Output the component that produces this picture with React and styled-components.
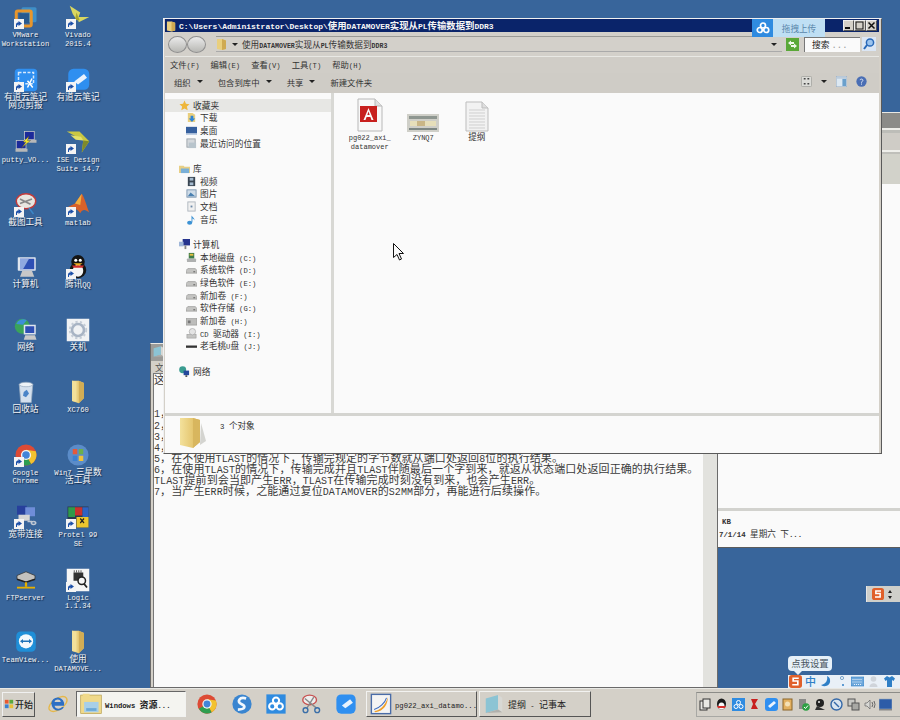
import React from 'react';
import styled, { createGlobalStyle } from 'styled-components';

const GlobalStyle = createGlobalStyle`
  html, body { margin: 0; padding: 0; background: #38659b; }
  body { font-family: "Noto Sans CJK SC", sans-serif; overflow: hidden; }
`;

const Lat = styled.span`
  font-family: "Liberation Mono", monospace;
`;

// latin runs get a mono face of their own, the CJK stays in Noto
const Mixed = ({ text }) =>
  text.split(/([\x20-\x7e]+)/).filter(Boolean).map((part, i) =>
    /^[\x20-\x7e]+$/.test(part) ? <Lat key={i}>{part}</Lat> : <span key={i}>{part}</span>
  );

const Screen = styled.div`
  width: 900px;
  height: 720px;
  display: flex;
  flex-direction: column;
  overflow: hidden;
`;

const Desktop = styled.div`
  position: relative;
  height: 688px;
  background: #38659b;
`;

const IconGrid = styled.div`
  display: grid;
  grid-template-columns: 51px 54px;
  grid-auto-rows: 62.5px;
  padding-top: 5px;
  width: 105px;
`;

const IconCell = styled.div`
  display: flex;
  flex-direction: column;
  align-items: center;
`;

const IconBox = styled.div`
  position: relative;
  width: 24px;
  height: 24px;
  svg { display: block; width: 24px; height: 24px; }
`;

const Shortcut = styled.span`
  position: absolute;
  left: 0;
  bottom: 0;
  width: 10px;
  height: 10px;
  svg { width: 10px; height: 10px; }
`;

const IconLabel = styled.div`
  color: #f4f4f4;
  font-size: 8.6px;
  line-height: 8.6px;
  text-align: center;
  white-space: nowrap;
  text-shadow: 1px 1px 1px #12294a;
  ${Lat} { font-size: 7.2px; }
  div { height: 8.6px; }
`;

const WindowFrame = styled.div`
  position: absolute;
  box-sizing: border-box;
  background: #d4d0c8;
  border: 1px solid #5c5c5c;
  border-top-color: #e8e8e4;
  border-left-color: #e8e8e4;
`;

/* back window on the right */
const BackWindow = styled(WindowFrame)`
  left: 717px;
  top: 112px;
  width: 190px;
  height: 436px;
  display: flex;
  flex-direction: column;
  border-left: 1px solid #555;
`;
const BackTitle = styled.div`
  height: 15px;
  background: #8b8b88;
`;
const BackStrip = styled.div`
  height: ${p => p.$h}px;
  background: ${p => p.$c};
`;
const BackBody = styled.div`
  flex: 1;
  background: #fafafa;
  display: flex;
  flex-direction: column;
  justify-content: flex-end;
`;
const BackRule = styled.div`
  height: 3px;
  margin-bottom: 3px;
  background: #d2d2ce;
`;
const BackMeta = styled.div`
  padding: 0 0 7px 1px;
  font-size: 8.6px;
  line-height: 13px;
  color: #333;
  ${Lat} { font-size: 7.4px; font-weight: 700; }
`;
const BackMetaLine = styled.div`
  height: 13px;
  padding-left: ${p => p.$indent || 0}px;
`;

/* notepad */
const Notepad = styled(WindowFrame)`
  left: 150px;
  top: 343px;
  width: 568px;
  height: 345px;
  border-color: #6a6a6a;
  border-top-color: #e8e8e4;
  display: flex;
  flex-direction: column;
`;
const NoteTitle = styled.div`
  height: 16px;
  background: #9b9b98;
  padding: 1px 0 0 1px;
  svg { display: block; width: 13px; height: 13px; }
`;
const NoteMenu = styled.div`
  height: 12px;
  font-size: 8.6px;
  line-height: 12px;
  padding-left: 4px;
  color: #555;
  background: #d4d0c8;
`;
const NoteBody = styled.div`
  flex: 1;
  display: flex;
  background: #fafafa;
  border-top: 1px solid #777;
  border-left: 1px solid #777;
  margin-left: 2px;
`;
const NoteText = styled.div`
  flex: 1;
  font-size: 11px;
  line-height: 11.15px;
  letter-spacing: .1px;
  color: #3a3a3a;
  ${Lat} { font-size: 10px; }
`;
const NoteLine = styled.div`
  height: 11.15px;
  white-space: nowrap;
`;
const NoteScroll = styled.div`
  width: 14px;
  background: #e2e2de;
`;

/* explorer */
const Explorer = styled(WindowFrame)`
  left: 163px;
  top: 18px;
  width: 719px;
  height: 436px;
  border-color: #5a5a5a;
  border-top-color: #f0f0f0;
  border-left-color: #f0f0f0;
  display: flex;
  flex-direction: column;
  padding: 0 2px 0 1px;
`;
const TitleBar = styled.div`
  height: 13px;
  background: #0a246a;
  display: flex;
  align-items: center;
  padding-left: 1px;
  gap: 2px;
  svg { display: block; width: 11px; height: 12px; }
`;
const TitleText = styled.div`
  flex: 1;
  color: #f6f6f6;
  font-size: 9.4px;
  line-height: 13px;
  font-weight: 700;
  white-space: nowrap;
  ${Lat} { font-size: 8px; }
`;
const WinButtons = styled.div`
  display: flex;
  margin-right: 2px;
`;
const WinButton = styled.div`
  width: 11.5px;
  height: 11px;
  box-sizing: border-box;
  background: #d4d0c8;
  border: 1px solid #eee;
  border-right-color: #555;
  border-bottom-color: #555;
  svg { display: block; width: 9px; height: 9px; }
`;
const UploadBadge = styled.div`
  position: absolute;
  left: 588px;
  top: 0;
  width: 73px;
  height: 18px;
  display: flex;
  background: #bfdff4;
  color: #5b87ab;
  font-size: 8.6px;
`;
const UploadLogo = styled.div`
  width: 21px;
  background: #2f8be0;
  display: flex;
  align-items: center;
  justify-content: center;
  svg { width: 14px; height: 12px; }
`;
const UploadText = styled.div`
  flex: 1;
  text-align: center;
  line-height: 18px;
`;

const AddressRow = styled.div`
  height: 24px;
  display: flex;
  align-items: center;
  background: #d3d0ca;
  padding-left: 3px;
  border-bottom: 1px solid #e8e8e4;
`;
const NavButton = styled.div`
  width: 19px;
  height: 17px;
  box-sizing: border-box;
  border-radius: 50%;
  border: 1px solid #8f8f8f;
  background: linear-gradient(#eaeaea, #b8b8b4);
`;
const AddressField = styled.div`
  flex: 1;
  margin-left: 10px;
  height: 14px;
  display: flex;
  align-items: center;
  border-top: 1px solid #9a9a96;
  border-bottom: 1px solid #aaa;
  font-size: 8.6px;
  color: #333;
  gap: 4px;
  svg { display: block; width: 12px; height: 12px; }
  ${Lat} { font-size: 6.6px; font-weight: 700; }
`;
const Caret = styled.i`
  display: inline-block;
  width: 0;
  height: 0;
  border-left: 3px solid transparent;
  border-right: 3px solid transparent;
  border-top: 3px solid #222;
  margin-left: ${p => p.$gap || 0}px;
`;
const FieldTail = styled.div`
  margin-left: auto;
  padding-right: 5px;
  display: flex;
`;
const RefreshBtn = styled.div`
  margin-left: 4px;
  width: 13px;
  height: 13px;
  svg { display: block; width: 13px; height: 13px; }
`;
const SearchBox = styled.div`
  margin-left: 5px;
  width: 56px;
  height: 15px;
  box-sizing: border-box;
  background: #fafafa;
  border-left: 1px solid #777;
  border-top: 1px solid #777;
  font-size: 8.8px;
  line-height: 13px;
  padding-left: 7px;
  color: #222;
`;
const SearchDots = styled(Lat)`
  color: #999;
`;
const SearchBtn = styled.div`
  margin: 0 3px 0 2px;
  width: 14px;
  height: 14px;
  svg { display: block; width: 14px; height: 14px; }
`;

const MenuBar = styled.div`
  height: 16px;
  box-sizing: border-box;
  display: flex;
  align-items: center;
  gap: 11px;
  padding: 0 0 2px 5px;
  background: #d0cdc7;
  font-size: 8.3px;
  color: #333;
  white-space: nowrap;
  ${Lat} { font-size: 7.2px; }
`;
const ToolBar = styled.div`
  height: 20px;
  box-sizing: border-box;
  display: flex;
  align-items: center;
  padding: 0 0 3px 9px;
  background: #cfccc6;
  font-size: 8.4px;
  color: #333;
`;
const ToolItem = styled.div`
  display: flex;
  align-items: center;
  gap: 6px;
  margin-right: 15px;
  white-space: nowrap;
`;
const ToolIcons = styled.div`
  margin-left: auto;
  margin-right: 12px;
  display: flex;
  align-items: center;
  gap: 9px;
  svg { display: block; width: 11px; height: 11px; }
`;

const MainPane = styled.div`
  height: 320px;
  display: flex;
  background: #fafafa;
`;
const Sidebar = styled.div`
  width: 166px;
  padding-top: 6px;
  border-right: 3px solid #d8d8d4;
  display: grid;
  grid-auto-rows: 12.67px;
  align-content: start;
`;
const TreeRow = styled.div`
  display: flex;
  align-items: center;
  gap: 3px;
  padding-left: ${p => (p.$child ? 21 : 14)}px;
  background: ${p => (p.$selected ? '#e7e7e4' : 'transparent')};
  font-size: 8.7px;
  color: #333;
  white-space: nowrap;
  svg { display: block; width: 11px; height: 11px; flex: none; }
  ${Lat} { font-size: 7.2px; }
`;
const FileArea = styled.div`
  flex: 1;
  display: flex;
  align-items: flex-start;
  padding: 4px 0 0 9px;
`;
const FileItem = styled.div`
  width: 53.5px;
  display: flex;
  flex-direction: column;
  align-items: center;
`;
const FileIcon = styled.div`
  height: 35px;
  display: flex;
  align-items: flex-end;
  svg { display: block; width: ${p => p.$w}px; height: ${p => p.$h}px; }
`;
const FileLabel = styled.div`
  font-size: 8.6px;
  line-height: 8.5px;
  text-align: center;
  color: #333;
  white-space: nowrap;
  ${Lat} { font-size: 7px; }
  div { height: 8.5px; }
`;
const StatusBar = styled.div`
  flex: 1;
  display: flex;
  align-items: flex-start;
  background: #fafafa;
  border-top: 3px solid #d4d4d0;
  padding-left: 14px;
  svg { display: block; width: 28px; height: 31px; margin-top: 1px; }
`;
const StatusText = styled.div`
  margin: 3px 0 0 13px;
  font-size: 8.6px;
  color: #333;
  ${Lat} { font-size: 7.4px; }
`;

/* overlays on the desktop */
const Cursor = styled.div`
  position: absolute;
  left: 393px;
  top: 243px;
  svg { display: block; width: 11px; height: 18px; }
`;
const ImeFloat = styled.div`
  position: absolute;
  left: 866px;
  top: 586px;
  width: 34px;
  height: 16px;
  background: #cfcfca;
  border-left: 1px solid #e6e6e6;
  display: flex;
  align-items: center;
  gap: 4px;
  padding-left: 5px;
  box-sizing: border-box;
  svg { display: block; width: 12px; height: 12px; }
`;
const ImeDots = styled.div`
  display: flex;
  flex-direction: column;
  gap: 3px;
  i { display: block; width: 0; height: 0; border-left: 2.5px solid transparent; border-right: 2.5px solid transparent; }
  i:first-child { border-bottom: 3px solid #222; }
  i:last-child { border-top: 3px solid #222; }
`;
const ImeBar = styled.div`
  position: absolute;
  left: 788px;
  top: 675px;
  width: 112px;
  height: 13px;
  background: #e9f0f7;
  display: flex;
  align-items: center;
  gap: 3px;
  padding-left: 1px;
  box-sizing: border-box;
  svg { display: block; width: 13px; height: 13px; flex: none; }
`;
const ImeZh = styled.span`
  color: #2f7fc6;
  font-size: 11px;
  line-height: 13px;
  font-weight: 500;
`;
const ImeTip = styled.div`
  position: absolute;
  left: 788px;
  top: 656px;
  width: 44px;
  height: 15px;
  background: #e6f0f8;
  border-radius: 4px;
  color: #4a5560;
  font-size: 9.4px;
  line-height: 15px;
  text-align: center;
  &::after {
    content: "";
    position: absolute;
    left: 6px;
    bottom: -4px;
    border-left: 4px solid transparent;
    border-right: 4px solid transparent;
    border-top: 4px solid #e6f0f8;
  }
`;

/* taskbar */
const TaskBar = styled.div`
  height: 32px;
  box-sizing: border-box;
  background: #d4d0c8;
  border-top: 1px solid #e8e8e4;
  display: flex;
  align-items: center;
  padding: 1px 0 2px 2px;
`;
const StartButton = styled.div`
  width: 33px;
  height: 25px;
  box-sizing: border-box;
  display: flex;
  align-items: center;
  justify-content: center;
  gap: 1px;
  border: 1px solid #f0f0f0;
  border-right-color: #555;
  border-bottom-color: #555;
  font-size: 9px;
  color: #222;
  font-weight: 500;
  svg { width: 10px; height: 10px; }
`;
const QuickIcon = styled.div`
  width: 22px;
  height: 22px;
  margin-left: ${p => p.$gap}px;
  svg { display: block; width: 22px; height: 22px; }
`;
const TaskButton = styled.div`
  width: ${p => p.$w}px;
  height: 26px;
  box-sizing: border-box;
  margin-left: ${p => p.$gap}px;
  display: flex;
  align-items: center;
  gap: 3px;
  padding-left: 3px;
  background: ${p => (p.$active ? '#f4f4f0' : '#d4d0c8')};
  border: 1px solid ${p => (p.$active ? '#666' : '#f2f2f0')};
  border-right-color: ${p => (p.$active ? '#f2f2f0' : '#555')};
  border-bottom-color: ${p => (p.$active ? '#f2f2f0' : '#555')};
  font-size: 9px;
  color: #222;
  white-space: nowrap;
  font-weight: ${p => (p.$active ? 700 : 400)};
  svg { display: block; width: 22px; height: 22px; flex: none; }
  ${Lat} { font-size: 7.2px; }
`;
const Tray = styled.div`
  margin-left: auto;
  height: 25px;
  width: 204px;
  box-sizing: border-box;
  border: 1px solid #a8a8a4;
  border-right: none;
  border-top-color: #8c8c88;
  display: flex;
  align-items: center;
  padding-left: 2px;
  gap: 3.4px;
  svg { display: block; width: 13px; height: 13px; flex: none; }
`;

/* icons */
const ArrowBadge = () => (
  <Shortcut>
    <svg viewBox="0 0 10 10"><rect width="10" height="10" fill="#f4f4f4" /><path d="M2 8V5.5C2 4 3 3.4 4.5 3.4V2L8 4.6 4.5 7V5.4C3.4 5.4 3 6 3 8Z" fill="#1c4fa8" /></svg>
  </Shortcut>
);

const Svg = ({ children, vb = '0 0 32 32' }) => <svg viewBox={vb}>{children}</svg>;

const VMware = () => <Svg><rect x="10" y="3" width="20" height="20" rx="2" fill="#3f8fc8" /><rect x="3" y="8" width="20" height="20" rx="2" fill="none" stroke="#e8962c" strokeWidth="4" /><rect x="7" y="11" width="13" height="13" fill="#28598e" /></Svg>;
const Vivado = () => <Svg><path d="M5 1L19 10 15 21 9 12Z" fill="#d9d760" /><path d="M15 16L31 16 17 23Z" fill="#d9d760" /><path d="M14 10L18 20 12 20Z" fill="#a8a52e" /></Svg>;
const YoudaoClip = () => <Svg><rect x="1" y="1" width="30" height="30" rx="5" fill="#2f8ff0" /><rect x="6" y="6" width="20" height="15" fill="none" stroke="#d5e8fb" strokeWidth="2" strokeDasharray="4 2" /><path d="M18 26L24 14M25 26L18 17" stroke="#fff" strokeWidth="2" /></Svg>;
const Youdao = () => <Svg><rect x="3" y="1" width="28" height="28" rx="7" fill="#2f8ff0" /><path d="M11 18L24 8 28 13 16 22Z" fill="#e8f2fd" /></Svg>;
const Putty = () => <Svg><rect x="14" y="2" width="13" height="11" fill="#1c2a9a" stroke="#ccc" /><rect x="3" y="14" width="13" height="11" fill="#1c2a9a" stroke="#ccc" /><rect x="14" y="13" width="16" height="4" fill="#b8b8b8" /><rect x="2" y="25" width="16" height="4" fill="#b8b8b8" /><path d="M20 8L12 16 16 16 10 24 22 14 18 14Z" fill="#f2e32e" stroke="#333" strokeWidth=".5" /></Svg>;
const ISE = () => <Svg><path d="M1 2H18L31 15 21 30 23 14Z" fill="#c9c843" /><path d="M23 14L31 15 21 30Z" fill="#7e8a2a" /><path d="M6 7L20 9 23 14 13 13Z" fill="#e3e26a" /></Svg>;
const Snip = () => <Svg><ellipse cx="16" cy="11" rx="13" ry="10" fill="#e8e6e0" stroke="#c23b3b" strokeWidth="2" /><path d="M8 14L24 8M8 8L22 15" stroke="#888" strokeWidth="2.4" /><path d="M10 20L6 30M20 20L26 28" stroke="#3a86c8" strokeWidth="2" /></Svg>;
const Matlab = () => <Svg><path d="M2 19L12 14 21 1C24 4 28 19 31 26 26 22 22 21 19 27 16 22 12 20 9 22Z" fill="#d8622a" /><path d="M12 14L21 1 19 16Z" fill="#f0b040" /></Svg>;
const ComputerIcon = () => <Svg><rect x="5" y="3" width="24" height="18" rx="1" fill="#dfe5ee" /><path d="M8 5H27V19H8Z" fill="#2e4fb4" /><path d="M8 5L20 5 12 19H8Z" fill="#8fa8e0" /><path d="M11 21H24L27 29H8Z" fill="#c8c8c8" /></Svg>;
const QQ = () => <Svg><ellipse cx="16" cy="20" rx="11" ry="11" fill="#141414" /><ellipse cx="16" cy="9" rx="9" ry="9" fill="#141414" /><ellipse cx="16" cy="21" rx="7" ry="8" fill="#f4f4f4" /><circle cx="13" cy="7" r="2" fill="#fff" /><circle cx="19" cy="7" r="2" fill="#fff" /><path d="M10 11H22L16 15Z" fill="#eeb020" /><path d="M8 14H24L22 17H10Z" fill="#d02c2c" /></Svg>;
const Network = () => <Svg><circle cx="11" cy="11" r="10" fill="#3aa35a" /><path d="M3 8A10 10 0 0 1 17 3L12 9Z" fill="#3d8fd8" /><rect x="13" y="9" width="16" height="13" fill="#dfe5ee" /><rect x="15" y="11" width="12" height="9" fill="#2e4fb4" /><path d="M15 23H28L30 29H13Z" fill="#c8c8c8" /></Svg>;
const Shutdown = () => <Svg><rect x="1" y="1" width="30" height="30" fill="#f0f2f4" /><circle cx="16" cy="16" r="8" fill="none" stroke="#a8b4c4" strokeWidth="3.5" /><circle cx="16" cy="16" r="11" fill="none" stroke="#c4ccd6" strokeWidth="2.5" strokeDasharray="3 3" /></Svg>;
const Recycle = () => <Svg><path d="M7 6H25L23 30H9Z" fill="#d4e0ee" stroke="#9aacc0" /><ellipse cx="16" cy="6" rx="9" ry="3" fill="#eef3f8" stroke="#9aacc0" /><path d="M13 16L17 13 20 18 16 23 12 21Z" fill="#4a84c8" /></Svg>;
const Folder = () => <Svg><path d="M8 1H17L24 4V24L17 31 8 28Z" fill="#e9cf7e" /><path d="M17 1L24 4V24L17 31Z" fill="#d2ad55" /><path d="M8 1L14 2 14 29 8 28Z" fill="#f2e09a" /></Svg>;
const StatusFolder = () => <Svg vb="0 0 28 31"><defs><linearGradient id="statusFold" x1="0" x2="1" y1="0" y2="0"><stop offset="0" stopColor="#f3e19c" /><stop offset=".6" stopColor="#e6c873" /><stop offset="1" stopColor="#cfa94f" /></linearGradient></defs><path d="M22 6L27 24 21 28Z" fill="#d4d4d0" /><path d="M1 1H14L21 3V25L14 31 1 28Z" fill="url(#statusFold)" /><path d="M14 1L21 3V25L14 31Z" fill="#d8b65e" /></Svg>;
const Chrome = () => <Svg><circle cx="16" cy="16" r="14" fill="#dd4b35" /><path d="M16 16L4 23A14 14 0 0 0 23 28Z" fill="#2f9e4f" /><path d="M16 16L23 28A14 14 0 0 0 29 11L16 9Z" fill="#f2c230" /><circle cx="16" cy="16" r="6.8" fill="#f5f5f5" /><circle cx="16" cy="16" r="5" fill="#4285d8" /></Svg>;
const Win7 = () => <Svg><circle cx="16" cy="16" r="14" fill="#5b8cc8" /><rect x="9" y="8" width="6" height="7" fill="#e45a3a" /><rect x="17" y="8" width="6" height="7" fill="#6ab04c" /><rect x="9" y="17" width="6" height="7" fill="#3a80d0" /><rect x="17" y="17" width="6" height="7" fill="#efc23a" /></Svg>;
const Broadband = () => <Svg><rect x="4" y="1" width="13" height="12" fill="#27409c" /><rect x="15" y="3" width="13" height="12" fill="#6f8dd8" /><rect x="6" y="13" width="15" height="8" fill="#d6d6d6" /><path d="M18 22H24M26 22a3 2 0 1 0 .1 0" stroke="#c0c8d4" strokeWidth="2" fill="none" /></Svg>;
const Protel = () => <Svg><rect x="2" y="2" width="28" height="28" fill="#283a50" /><path d="M3 3H12V16H3Z" fill="#2f9a4a" /><path d="M12 3H22V14H12Z" fill="#c8322e" /><path d="M22 3H30V16H22Z" fill="#2d62c4" /><path d="M14 16H30V30H14Z" fill="#ecc62e" /><path d="M19 18L24 24M24 18L19 24" stroke="#222" strokeWidth="1.6" /></Svg>;
const Ftp = () => <Svg><path d="M4 10L16 5 28 10 28 15 16 19 4 15Z" fill="#c4c2be" stroke="#333" /><path d="M4 15L16 19 28 15" fill="none" stroke="#222" strokeWidth="2" /><rect x="14.5" y="19" width="3" height="6" fill="#e6b000" /><rect x="4" y="25" width="24" height="2.4" fill="#e6b000" /></Svg>;
const Logic = () => <Svg><rect x="1" y="1" width="30" height="30" fill="#f6f6f6" /><rect x="10" y="6" width="13" height="11" fill="#333" /><path d="M11 3V6M14 3V6M17 3V6M20 3V6" stroke="#333" /><circle cx="21" cy="17" r="5" fill="#f6f6f6" stroke="#222" strokeWidth="2" /><path d="M24 21L28 26" stroke="#222" strokeWidth="2.4" /></Svg>;
const TeamViewer = () => <Svg><rect x="3" y="2" width="26" height="27" rx="6" fill="#1f8fd8" /><circle cx="16" cy="15" r="9.5" fill="#f3f8fc" /><path d="M8 15L12 12V14H20V12L24 15 20 18V16H12V18Z" fill="#1f72b8" /></Svg>;
const PdfIcon = () => <Svg vb="0 0 26 34"><path d="M1 1H18L25 8V33H1Z" fill="#f8f8f8" stroke="#b8b8b8" /><path d="M18 1V8H25" fill="#e0e0e0" stroke="#b8b8b8" /><rect x="3" y="8" width="17" height="16" fill="#c8201e" /><path d="M11.5 10L16.5 22H14.5L13.4 19H9.6L8.5 22H6.5ZM10.3 17H12.7L11.5 13.6Z" fill="#fafafa" /></Svg>;
const ChipIcon = () => <Svg vb="0 0 32 18"><rect width="32" height="18" fill="#cfcfc8" /><rect x="2" y="2" width="28" height="3" fill="#8e9690" /><rect x="3" y="7" width="26" height="5" fill="#e6dfba" /><rect x="10" y="7" width="8" height="5" fill="#c9b686" /><rect x="2" y="14" width="28" height="2" fill="#7e8884" /></Svg>;
const TxtIcon = () => <Svg vb="0 0 24 31"><path d="M1 1H17L23 7V30H1Z" fill="#f2f2f2" stroke="#bdbdbd" /><path d="M17 1V7H23" fill="#dedede" stroke="#bdbdbd" /><path d="M4 9H20M4 12H20M4 15H20M4 18H20M4 21H20M4 24H20M4 27H20" stroke="#cfcfcf" /></Svg>;
const SmallFolder = () => <Svg vb="0 0 12 12"><path d="M1 1H6L10 2.5V11L6 12 1 11Z" fill="#e9cf7e" /><path d="M6 1L10 2.5V11L6 12Z" fill="#cfaa52" /></Svg>;
const Star = () => <Svg vb="0 0 12 12"><path d="M6 .5L7.6 4.2 11.5 4.6 8.6 7.2 9.5 11.3 6 9.2 2.5 11.3 3.4 7.2.5 4.6 4.4 4.2Z" fill="#eeb63a" /></Svg>;
const DownloadIcon = () => <Svg vb="0 0 12 12"><path d="M2 1H7L10 3V11H2Z" fill="#e9cf7e" /><path d="M5 4H8V7H10L6.5 11 3 7H5Z" fill="#2f84d4" /></Svg>;
const DesktopIcon = () => <Svg vb="0 0 12 12"><rect y="2" width="12" height="7" fill="#36609e" /><rect y="9" width="12" height="1.5" fill="#9cb4d4" /></Svg>;
const RecentIcon = () => <Svg vb="0 0 12 12"><rect x="1" y="1" width="9" height="9" fill="#d4d8dc" stroke="#9aa2aa" /><rect x="3" y="5" width="8" height="6" fill="#b8c4cc" /></Svg>;
const LibIcon = () => <Svg vb="0 0 12 12"><path d="M0 3H5L6 4H12V11H0Z" fill="#e8cf85" /><path d="M2 6H11V11H2Z" fill="#7ab0d8" /></Svg>;
const VideoIcon = () => <Svg vb="0 0 12 12"><rect x="2" y="1" width="8" height="10" fill="#3a4652" /><rect x="4" y="2" width="4" height="3" fill="#a4bace" /><rect x="4" y="7" width="4" height="3" fill="#a4bace" /></Svg>;
const PicIcon = () => <Svg vb="0 0 12 12"><rect x="1" y="2" width="10" height="8" fill="#cfdce8" stroke="#7f98b0" /><path d="M2 9L5 5 10 9Z" fill="#4a80b0" /></Svg>;
const DocIcon = () => <Svg vb="0 0 12 12"><rect x="2" y="1" width="8" height="10" fill="#f0f0f0" stroke="#aeb6be" /><rect x="5" y="5" width="2" height="2" fill="#6a88a8" /></Svg>;
const MusicIcon = () => <Svg vb="0 0 12 12"><ellipse cx="4" cy="9.5" rx="2.8" ry="2.2" fill="#3c92d4" /><path d="M6 9V1C6 3 10 4 9 7 8.5 5 7 5 7 5V9Z" fill="#3c92d4" /></Svg>;
const PcIcon = () => <Svg vb="0 0 12 12"><rect x="4" y="0" width="8" height="7" fill="#26348e" /><rect x="0" y="3" width="5" height="5" fill="#9fb6d8" /><path d="M6 7H8V11H6Z" fill="#888" /></Svg>;
const SysDisk = () => <Svg vb="0 0 12 12"><rect x="1" y="7" width="10" height="4" rx="1" fill="#aeb0b0" /><rect x="3" y="1" width="6" height="6" fill="#3f7c4a" /><rect x="4" y="2" width="4" height="2" fill="#e6c040" /></Svg>;
const Disk = () => <Svg vb="0 0 12 12"><path d="M2 5H10L12 7V10H0V7Z" fill="#c4c4c2" stroke="#8a8a88" strokeWidth=".6" /><rect x="8" y="8" width="2" height="1" fill="#555" /></Svg>;
const Disk2 = () => <Svg vb="0 0 12 12"><rect x="0" y="4" width="12" height="7" fill="#bcbcba" stroke="#8a8a88" strokeWidth=".6" /><path d="M2 6H5V9H2Z" fill="#777" /></Svg>;
const CdIcon = () => <Svg vb="0 0 12 12"><rect x="1" y="7" width="10" height="4" fill="#c4c4c2" stroke="#888" strokeWidth=".5" /><circle cx="7" cy="4" r="3.5" fill="#e4e4e4" stroke="#888" strokeWidth=".5" /></Svg>;
const UDisk = () => <Svg vb="0 0 12 12"><rect x="0" y="6" width="12" height="2.5" fill="#333" /></Svg>;
const NetIcon = () => <Svg vb="0 0 12 12"><circle cx="4" cy="4" r="3.8" fill="#3a9c90" /><rect x="5" y="5" width="6" height="5" fill="#24489c" /><rect x="7" y="10" width="2" height="2" fill="#555" /></Svg>;
const BackCloud = ({ c = '#fff' }) => <Svg vb="0 0 28 24"><circle cx="14" cy="7" r="5" fill="none" stroke={c} strokeWidth="3.4" /><circle cx="7.5" cy="16" r="5" fill="none" stroke={c} strokeWidth="3.4" /><circle cx="20.5" cy="16" r="5" fill="none" stroke={c} strokeWidth="3.4" /></Svg>;
const Refresh = () => <Svg vb="0 0 13 13"><rect width="13" height="13" fill="#5aa838" /><path d="M2 5L5 2.5V4H8V6H5V7.5ZM11 8L8 10.5V9H5V7H8V5.5Z" fill="#f0f8ea" /></Svg>;
const SearchGlass = () => <Svg vb="0 0 14 14"><rect width="14" height="14" fill="#dbe6f4" /><circle cx="8" cy="5.5" r="3.6" fill="#9cc4ee" stroke="#2868b8" strokeWidth="1.5" /><path d="M5 8L2 12" stroke="#2868b8" strokeWidth="2" /></Svg>;
const ViewIcon = () => <Svg vb="0 0 12 12"><rect x=".5" y=".5" width="11" height="11" rx="1" fill="#dcdcd8" stroke="#a8a8a4" /><path d="M3 3H5M7 3H9M3 8.5H5M7 8.5H9" stroke="#444" strokeWidth="1.6" /></Svg>;
const PaneIcon = () => <Svg vb="0 0 12 12"><rect width="12" height="12" fill="#dce8f2" stroke="#8ea4ba" /><rect x="7" y="3" width="4" height="8" fill="#6aa0cc" /><rect x="1" y="1" width="10" height="2" fill="#bcccdc" /></Svg>;
const HelpIcon = () => <Svg vb="0 0 12 12"><circle cx="6" cy="6" r="5.6" fill="#4a6eb4" /><path d="M4.5 4.5C4.5 3 7.5 3 7.5 4.6 7.5 6 6 5.8 6 7.4" fill="none" stroke="#e8eef8" /><rect x="5.5" y="8.2" width="1" height="1.2" fill="#e8eef8" /></Svg>;
const Sogou = () => <Svg vb="0 0 14 14"><rect width="14" height="14" rx="3" fill="#e0602a" /><path d="M10.5 3.5H4.5V6.5H9.5V10.5H3.5" fill="none" stroke="#fff" strokeWidth="1.8" /></Svg>;
const Ie = () => <Svg><ellipse cx="16" cy="16" rx="15" ry="8" fill="none" stroke="#e6b84a" strokeWidth="2" transform="rotate(-35 16 16)" /><path d="M6 16a9.5 10 0 1 1 18.8 2.5H11c.5 5 8 6 11 2h2.5c-3 7-16 8-18-4.5ZM11 13h9c-.5-4.500-8-4.500-9 0Z" fill="#2d6fc4" /></Svg>;
const SogouBrowser = () => <Svg><circle cx="16" cy="16" r="14" fill="#3a85d0" /><path d="M22 8C12 5 8 13 15 16S21 24 10 24" fill="none" stroke="#f2f8fd" strokeWidth="4" /></Svg>;
const BaiduApp = () => <Svg><rect x="2" y="2" width="28" height="28" fill="#2f8be0" /><circle cx="16" cy="11" r="4.5" fill="none" stroke="#fff" strokeWidth="3" /><circle cx="10.500" cy="19.500" r="4.5" fill="none" stroke="#fff" strokeWidth="3" /><circle cx="21.500" cy="19.500" r="4.5" fill="none" stroke="#fff" strokeWidth="3" /></Svg>;
const Scissors = () => <Svg><ellipse cx="14" cy="10" rx="10" ry="7" fill="#eee" stroke="#c85050" strokeWidth="2" /><path d="M7 8L24 22M20 6L10 22" stroke="#888" strokeWidth="2" /><circle cx="8" cy="25" r="3.5" fill="none" stroke="#3a6ea8" strokeWidth="2" /><circle cx="25" cy="25" r="3.5" fill="none" stroke="#3a6ea8" strokeWidth="2" /></Svg>;
const YoudaoTask = () => <Svg><rect x="2" y="2" width="28" height="28" rx="7" fill="#2f8ff0" /><path d="M10 18L22 9 26 14 15 22Z" fill="#e8f2fd" /></Svg>;
const ExplorerTask = () => <Svg><rect x="1" y="3" width="30" height="27" fill="#f0d98a" stroke="#b8a050" /><rect x="4" y="1" width="10" height="4" fill="#f0d98a" /><path d="M6 13H27V28H6Z" fill="#a8cfe8" /><path d="M9 22H24V26H9Z" fill="#6aa8d8" /></Svg>;
const AcrobatTask = () => <Svg><rect x="2" y="2" width="28" height="28" fill="#f4f4f4" stroke="#4a6ca8" strokeWidth="2" /><path d="M6 26C14 26 22 18 26 6 26 16 20 26 8 28Z" fill="#f0a028" /><path d="M6 24C14 22 22 14 24 7" fill="none" stroke="#3c6cc0" strokeWidth="1.5" /></Svg>;
const NotepadTask = () => <Svg><path d="M4 8L22 3V24L4 29Z" fill="#8cc4d4" /><path d="M22 3L28 7V28L22 24Z" fill="#d8d8d4" /><path d="M4 29L22 24 28 28Z" fill="#b0b0ac" /></Svg>;
const Logo = () => <Svg vb="0 0 12 12"><rect x="1" y="1" width="4.500" height="4.500" fill="#e85a30" /><rect x="6.500" y="1" width="4.500" height="4.500" fill="#5aa83c" /><rect x="1" y="6.500" width="4.500" height="4.500" fill="#3a80d0" /><rect x="6.500" y="6.500" width="4.500" height="4.500" fill="#e8c03a" /></Svg>;
const Cup = () => <Svg vb="0 0 13 13"><rect x="1" y="3" width="7" height="9" fill="#e8e8e4" stroke="#333" /><rect x="4" y="1" width="7" height="9" fill="#e8e8e4" stroke="#333" /></Svg>;
const TrayQQ = () => <Svg vb="0 0 13 13"><ellipse cx="6.500" cy="6" rx="4.500" ry="5.500" fill="#1a1a1a" /><ellipse cx="6.500" cy="8" rx="3" ry="3.500" fill="#fafafa" /><path d="M2 8H11L10 10H3Z" fill="#d8302c" /></Svg>;
const TrayE = () => <Svg vb="0 0 13 13"><path d="M3 1H10L7 6 10 11H3L5 6Z" fill="#c8201e" /></Svg>;
const TrayDoc = () => <Svg vb="0 0 13 13"><rect x="2" y="1" width="9" height="11" fill="#e2b060" stroke="#8a6428" /><circle cx="6.500" cy="6" r="2.500" fill="#f4e0b4" /></Svg>;
const TrayShield = () => <Svg vb="0 0 13 13"><rect x="2" y="1" width="7" height="10" fill="#8a8a88" /><circle cx="9" cy="9" r="3.800" fill="#2ea044" /><path d="M7 9L8.500 10.500 11 7.500" fill="none" stroke="#fff" /></Svg>;
const TrayInk = () => <Svg vb="0 0 13 13"><circle cx="6" cy="5" r="4" fill="#222" /><path d="M3 8L11 12H1Z" fill="#333" /><circle cx="5" cy="4" r="1" fill="#eee" /></Svg>;
const TrayGauge = () => <Svg vb="0 0 13 13"><circle cx="6.500" cy="6.500" r="5.500" fill="#d8e4f0" stroke="#3468a8" strokeWidth="1.400" /><path d="M4 4L9 9" stroke="#3468a8" strokeWidth="1.400" /></Svg>;
const TrayNet = () => <Svg vb="0 0 13 13"><rect x="1" y="1" width="7" height="7" fill="#c8c8c4" stroke="#555" /><rect x="5" y="5" width="7" height="7" fill="#a8a8a4" stroke="#555" /></Svg>;
const TraySound = () => <Svg vb="0 0 13 13"><path d="M2 5H4L7 2V11L4 8H2Z" fill="#d8d8d4" stroke="#666" strokeWidth=".7" /><path d="M9 4Q10.500 6.500 9 9M11 3Q13 6.500 11 10" fill="none" stroke="#666" /></Svg>;
const TrayScreen = () => <Svg vb="0 0 13 13"><rect y="1" width="13" height="10" fill="#2c5ca8" stroke="#9ab" strokeWidth=".6" /><rect y="11" width="13" height="1.500" fill="#888" /></Svg>;
const BaiduTray = () => <Svg vb="0 0 13 13"><rect width="13" height="13" fill="#2f8be0" /><circle cx="6.500" cy="4.500" r="2" fill="none" stroke="#fff" /><circle cx="4" cy="8.500" r="2" fill="none" stroke="#fff" /><circle cx="9" cy="8.500" r="2" fill="none" stroke="#fff" /></Svg>;
const YoudaoTray = () => <Svg vb="0 0 13 13"><rect width="13" height="13" rx="3" fill="#2f8ff0" /><path d="M3 8L9 3 11 5 5 10Z" fill="#eaf3fd" /></Svg>;
const Moon = () => <Svg vb="0 0 13 13"><path d="M8 1C9 5 7 9 2 10 6 13 12 10 11 5 11 3 10 2 8 1Z" fill="#2f7fc6" /></Svg>;
const DotIcon = () => <Svg vb="0 0 13 13"><circle cx="7" cy="3" r="1.600" fill="none" stroke="#7aa6cc" /><circle cx="8" cy="10" r="1" fill="#2f7fc6" /></Svg>;
const Keys = () => <Svg vb="0 0 13 13"><rect y="2" width="13" height="9" fill="#6ea8dc" stroke="#2f7fc6" strokeWidth=".6" /><path d="M1.500 4.500H11.500M1.500 7H11.500M3 9.500H10" stroke="#e8f2fb" strokeDasharray="1 1" /></Svg>;
const Man = () => <Svg vb="0 0 13 13"><circle cx="6.500" cy="4" r="2.800" fill="#cfd4da" /><path d="M2.500 12C2.500 7 10.500 7 10.500 12Z" fill="#cfd4da" /></Svg>;
const Shirt = () => <Svg vb="0 0 13 13"><path d="M4 1L1 3.500 2.500 6 4 5V12H9V5L10.500 6 12 3.500 9 1 6.500 2.500Z" fill="#2f7fc6" /></Svg>;
const Wrench = () => <Svg vb="0 0 13 13"><path d="M2 12L8 5.500C7.500 3 9 1 11.500 1.500L9.500 3.500 10.500 5 12.500 3C13 6 10 7.500 8.500 7L3 13Z" fill="#2f7fc6" /></Svg>;
const ArrowCursor = () => <Svg vb="0 0 11 18"><path d="M.5.5V14.500L4 11.500 6.500 17 8.500 16 6 10.500H10.500Z" fill="#fafafa" stroke="#111" /></Svg>;

const desktopIcons = [
  { icon: VMware, lines: ['VMware', 'Workstation'], link: true },
  { icon: Vivado, lines: ['Vivado', '2015.4'], link: true },
  { icon: YoudaoClip, lines: ['有道云笔记', '网页剪报'], link: true },
  { icon: Youdao, lines: ['有道云笔记'], link: true },
  { icon: Putty, lines: ['putty_VO...'], link: false },
  { icon: ISE, lines: ['ISE Design', 'Suite 14.7'], link: true },
  { icon: Snip, lines: ['截图工具'], link: true },
  { icon: Matlab, lines: ['matlab'], link: true },
  { icon: ComputerIcon, lines: ['计算机'], link: false },
  { icon: QQ, lines: ['腾讯QQ'], link: true },
  { icon: Network, lines: ['网络'], link: false },
  { icon: Shutdown, lines: ['关机'], link: false },
  { icon: Recycle, lines: ['回收站'], link: false },
  { icon: Folder, lines: ['XC760'], link: false },
  { icon: Chrome, lines: ['Google', 'Chrome'], link: true },
  { icon: Win7, lines: ['Win7_三星数', '活工具'], link: false },
  { icon: Broadband, lines: ['宽带连接'], link: true },
  { icon: Protel, lines: ['Protel 99', 'SE'], link: true },
  { icon: Ftp, lines: ['FTPserver'], link: false },
  { icon: Logic, lines: ['Logic', '1.1.34'], link: true },
  { icon: TeamViewer, lines: ['TeamView...'], link: false },
  { icon: Folder, lines: ['使用', 'DATAMOVE...'], link: false },
];

const treeRows = [
  { icon: Star, text: '收藏夹', selected: true },
  { icon: DownloadIcon, text: '下载', child: true },
  { icon: DesktopIcon, text: '桌面', child: true },
  { icon: RecentIcon, text: '最近访问的位置', child: true },
  {},
  { icon: LibIcon, text: '库' },
  { icon: VideoIcon, text: '视频', child: true },
  { icon: PicIcon, text: '图片', child: true },
  { icon: DocIcon, text: '文档', child: true },
  { icon: MusicIcon, text: '音乐', child: true },
  {},
  { icon: PcIcon, text: '计算机' },
  { icon: SysDisk, text: '本地磁盘 (C:)', child: true },
  { icon: Disk, text: '系统软件 (D:)', child: true },
  { icon: Disk, text: '绿色软件 (E:)', child: true },
  { icon: Disk, text: '新加卷 (F:)', child: true },
  { icon: Disk, text: '软件存储 (G:)', child: true },
  { icon: Disk2, text: '新加卷 (H:)', child: true },
  { icon: CdIcon, text: 'CD 驱动器 (I:)', child: true },
  { icon: UDisk, text: '老毛桃U盘 (J:)', child: true },
  {},
  { icon: NetIcon, text: '网络' },
];

const noteLines = [
  '这', '', '', '1\uFF0C', '2\uFF0C', '3\uFF0C', '4\uFF0C',
  '5\uFF0C在不使用TLAST的情况下\uFF0C传输完规定的字节数就从端口处返回8位的执行结果。',
  '6\uFF0C在使用TLAST的情况下\uFF0C传输完成并且TLAST伴随最后一个字到来\uFF0C就返从状态端口处返回正确的执行结果。',
  'TLAST提前到会当即产生ERR\uFF0CTLAST在传输完成时刻没有到来\uFF0C也会产生ERR。',
  '7\uFF0C当产生ERR时候\uFF0C之能通过复位DATAMOVER的S2MM部分\uFF0C再能进行后续操作。',
];

const App = () => (
  <Screen>
    <GlobalStyle />
    <Desktop>
      <IconGrid>
        {desktopIcons.map((d, i) => (
          <IconCell key={i}>
            <IconBox>
              <d.icon />
              {d.link && <ArrowBadge />}
            </IconBox>
            <IconLabel>
              {d.lines.map(l => <div key={l}><Mixed text={l} /></div>)}
            </IconLabel>
          </IconCell>
        ))}
      </IconGrid>

      <BackWindow>
        <BackTitle />
        <BackStrip $h={2} $c="#eeeeea" />
        <BackStrip $h={3} $c="#bdbdb8" />
        <BackStrip $h={17} $c="#cfccc6" />
        <BackStrip $h={2} $c="#efefeb" />
        <BackStrip $h={2} $c="#bfbfba" />
        <BackStrip $h={30} $c="#d2d2ca" />
        <BackBody>
          <BackRule />
          <BackMeta>
            <BackMetaLine $indent={3}><Mixed text="KB" /></BackMetaLine>
            <BackMetaLine><Mixed text="7/1/14 星期六 下..." /></BackMetaLine>
          </BackMeta>
        </BackBody>
      </BackWindow>

      <Notepad>
        <NoteTitle><NotepadTask /></NoteTitle>
        <NoteMenu>文</NoteMenu>
        <NoteBody>
          <NoteText>
            {noteLines.map((l, i) => <NoteLine key={i}><Mixed text={l} /></NoteLine>)}
          </NoteText>
          <NoteScroll />
        </NoteBody>
      </Notepad>

      <Explorer>
        <TitleBar>
          <SmallFolder />
          <TitleText><Mixed text="C:\Users\Administrator\Desktop\使用DATAMOVER实现从PL传输数据到DDR3" /></TitleText>
          <WinButtons>
            <WinButton><svg viewBox="0 0 9 9"><rect x="1" y="6" width="5" height="2" fill="#111" /></svg></WinButton>
            <WinButton><svg viewBox="0 0 9 9"><rect x="1" y="1" width="7" height="7" fill="none" stroke="#111" /></svg></WinButton>
            <WinButton><svg viewBox="0 0 9 9"><path d="M1.500 1.500L7.500 7.500M7.500 1.500L1.500 7.500" stroke="#111" strokeWidth="1.500" /></svg></WinButton>
          </WinButtons>
        </TitleBar>
        <UploadBadge>
          <UploadLogo><BackCloud /></UploadLogo>
          <UploadText>拖拽上传</UploadText>
        </UploadBadge>

        <AddressRow>
          <NavButton />
          <NavButton />
          <AddressField>
            <SmallFolder />
            <Caret />
            <span><Mixed text="使用DATAMOVER实现从PL传输数据到DDR3" /></span>
            <FieldTail><Caret /></FieldTail>
          </AddressField>
          <RefreshBtn><Refresh /></RefreshBtn>
          <SearchBox>搜索 <SearchDots>...</SearchDots></SearchBox>
          <SearchBtn><SearchGlass /></SearchBtn>
        </AddressRow>

        <MenuBar>
          {['文件(F)', '编辑(E)', '查看(V)', '工具(T)', '帮助(H)'].map(m => <span key={m}><Mixed text={m} /></span>)}
        </MenuBar>
        <ToolBar>
          <ToolItem>组织<Caret /></ToolItem>
          <ToolItem>包含到库中<Caret /></ToolItem>
          <ToolItem>共享<Caret /></ToolItem>
          <ToolItem>新建文件夹</ToolItem>
          <ToolIcons>
            <ViewIcon />
            <Caret />
            <PaneIcon />
            <HelpIcon />
          </ToolIcons>
        </ToolBar>

        <MainPane>
          <Sidebar>
            {treeRows.map((r, i) => (
              <TreeRow key={i} $child={r.child} $selected={r.selected}>
                {r.icon && <r.icon />}
                {r.text && <span><Mixed text={r.text} /></span>}
              </TreeRow>
            ))}
          </Sidebar>
          <FileArea>
            <FileItem>
              <FileIcon $w={26} $h={34}><PdfIcon /></FileIcon>
              <FileLabel><div><Mixed text="pg022_axi_" /></div><div><Mixed text="datamover" /></div></FileLabel>
            </FileItem>
            <FileItem>
              <FileIcon $w={32} $h={18}><ChipIcon /></FileIcon>
              <FileLabel><div><Mixed text="ZYNQ7" /></div></FileLabel>
            </FileItem>
            <FileItem>
              <FileIcon $w={24} $h={31}><TxtIcon /></FileIcon>
              <FileLabel><div>提纲</div></FileLabel>
            </FileItem>
          </FileArea>
        </MainPane>

        <StatusBar>
          <StatusFolder />
          <StatusText><Mixed text="3 个对象" /></StatusText>
        </StatusBar>
      </Explorer>

      <Cursor><ArrowCursor /></Cursor>

      <ImeFloat>
        <Sogou />
        <ImeDots><i /><i /></ImeDots>
      </ImeFloat>
      <ImeTip>点我设置</ImeTip>
      <ImeBar>
        <Sogou />
        <ImeZh>中</ImeZh>
        <Moon />
        <DotIcon />
        <Keys />
        <Man />
        <Shirt />
        <Wrench />
      </ImeBar>
    </Desktop>

    <TaskBar>
      <StartButton><Logo />开始</StartButton>
      <QuickIcon $gap={12}><Ie /></QuickIcon>
      <TaskButton $active $w={110} $gap={7}>
        <ExplorerTask />
        <span><Mixed text="Windows 资源..." /></span>
      </TaskButton>
      <QuickIcon $gap={10}><Chrome /></QuickIcon>
      <QuickIcon $gap={13}><SogouBrowser /></QuickIcon>
      <QuickIcon $gap={12}><BaiduApp /></QuickIcon>
      <QuickIcon $gap={13}><Scissors /></QuickIcon>
      <QuickIcon $gap={13}><YoudaoTask /></QuickIcon>
      <TaskButton $w={111} $gap={9}>
        <AcrobatTask />
        <span><Mixed text="pg022_axi_datamo..." /></span>
      </TaskButton>
      <TaskButton $w={112} $gap={2}>
        <NotepadTask />
        <span><Mixed text="提纲 - 记事本" /></span>
      </TaskButton>
      <Tray>
        <Cup />
        <TrayQQ />
        <BaiduTray />
        <TrayE />
        <YoudaoTray />
        <TrayDoc />
        <TrayShield />
        <TrayInk />
        <TrayGauge />
        <TrayNet />
        <TraySound />
        <TrayScreen />
      </Tray>
    </TaskBar>
  </Screen>
);

export default App;
